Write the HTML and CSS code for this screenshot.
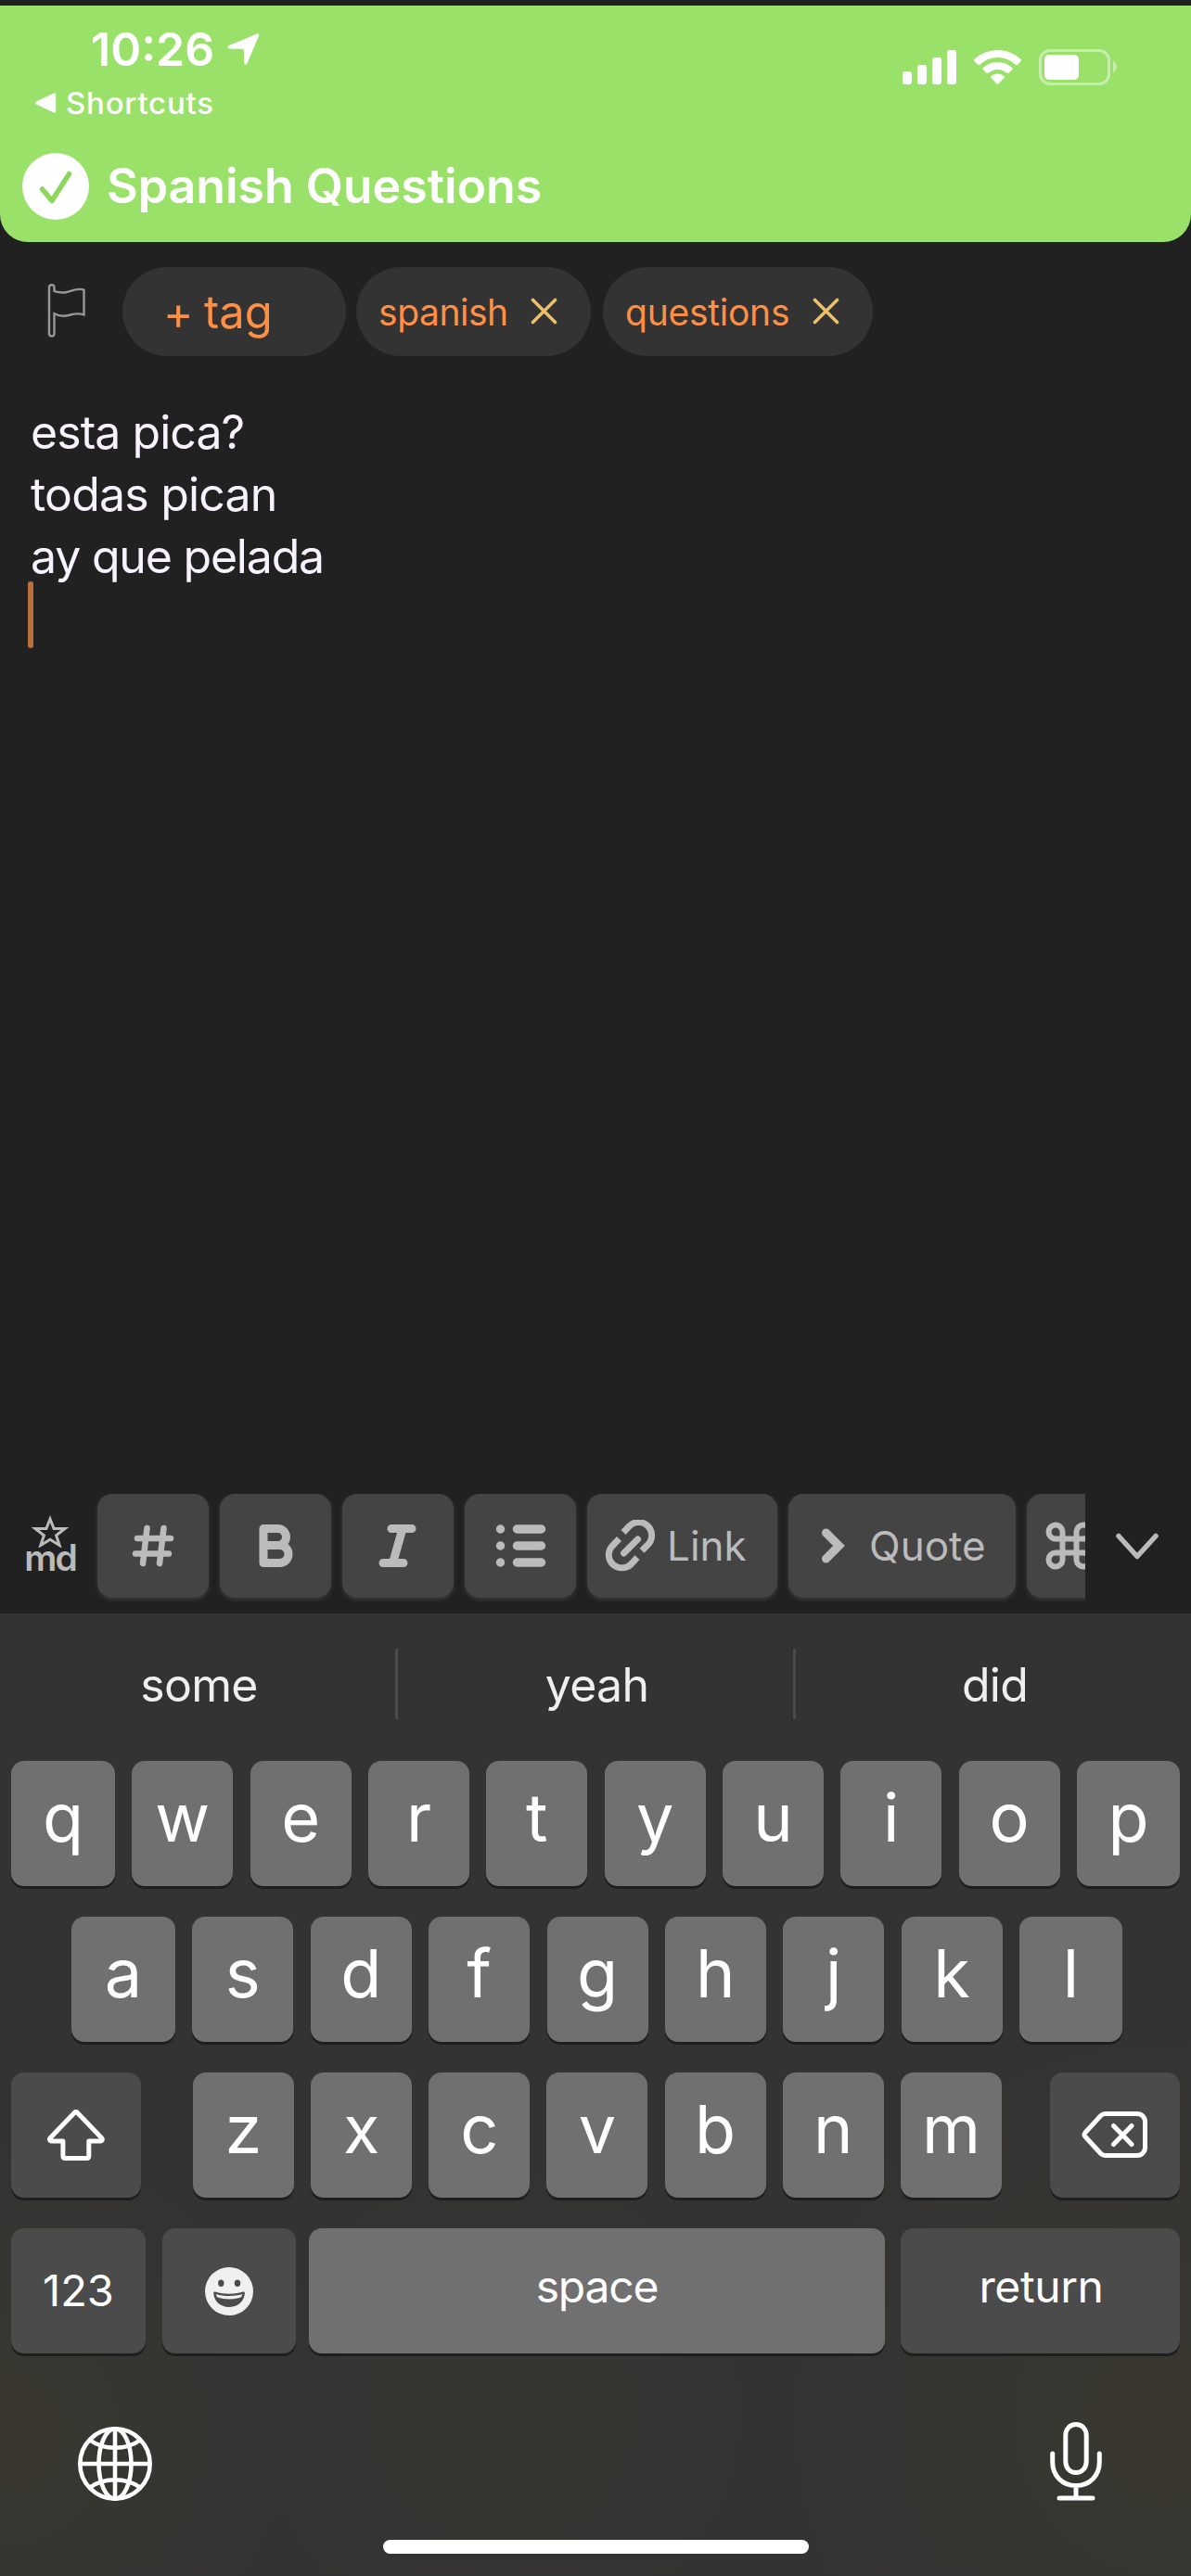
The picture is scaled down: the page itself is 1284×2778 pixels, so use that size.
FILE: index.html
```html
<!DOCTYPE html>
<html lang="en">
<head>
<meta charset="utf-8">
<title>Spanish Questions</title>
<link rel="stylesheet" href="styles.css">
</head>
<body>
<header class="header">
  <div class="status">
    <div class="status-left">
      <div class="time-row">
        <span class="time">10:26</span>
        <svg class="location" width="36" height="36" viewBox="0 0 36 36"><path d="M33 1.500c1.600-.5 2.600.5 2 2.200L22.500 33.200c-.8 2-3.200 1.700-3.300-.5L18.800 19.300c0-1-.5-1.500-1.500-1.500L3.400 17.500c-2.200-.1-2.600-2.500-.5-3.400z"/></svg>
      </div>
      <div class="back-row">
        <svg width="23" height="22" viewBox="0 0 23 22"><path d="M1.500 9.300 19.500.7c1.700-.7 2.700 0 2.700 1.500v17.600c0 1.500-1 2.200-2.700 1.500L1.500 12.700c-1.600-.8-1.600-2.600 0-3.400z"/></svg>
        <span class="back">Shortcuts</span>
      </div>
    </div>
    <svg class="status-icons" width="232" height="44" viewBox="0 0 232 44">
      <rect x="1" y="27" width="10" height="14" rx="3"/><rect x="17" y="20" width="10" height="21" rx="3"/><rect x="33" y="12" width="10" height="29" rx="3"/><rect x="49" y="4" width="10" height="37" rx="3"/>
      <path d="M103.500 4c9.500 0 18.300 3.700 25 10 .7.700.7 1.400.1 2l-3.600 3.700c-.7.700-1.400.6-2.100 0a28.300 28.300 0 0 0-38.800 0c-.7.600-1.400.7-2.100 0L78.400 16c-.6-.6-.6-1.300.1-2A36.300 36.300 0 0 1 103.500 4z"/>
      <path d="M103.500 17c6 0 11.500 2.300 15.700 6.100.7.700.7 1.400.1 2l-3.800 3.700c-.6.600-1.300.6-2 0a15 15 0 0 0-20 0c-.7.600-1.400.6-2 0l-3.800-3.700c-.6-.6-.6-1.300.1-2A23 23 0 0 1 103.500 17z"/>
      <path d="M103.500 29.500c2.600 0 5 .9 6.900 2.400.7.600.7 1.300.1 2l-5.900 6.300c-.7.700-1.500.7-2.200 0l-5.900-6.300c-.6-.7-.6-1.400.1-2 1.900-1.500 4.300-2.400 6.900-2.400z"/>
      <g opacity=".45"><rect class="battery" x="149.500" y="4.500" width="74" height="36" rx="10.500"/><path d="M228 16c5 2 5 10 0 12z"/></g>
      <rect x="154" y="9" width="37" height="27" rx="5"/>
    </svg>
  </div>
  <div class="title-row">
    <svg class="check" width="72" height="72" viewBox="0 0 72 72"><circle cx="36" cy="36" r="36"/><path d="M21.500 39 32 51.500 50.500 22.500"/></svg>
    <h1 class="title">Spanish Questions</h1>
  </div>
</header>

<div class="tags">
  <svg class="flag" width="42" height="60" viewBox="0 0 42 60"><path d="M2 4.500a2.800 2.800 0 0 1 5.500 0v4.300c4 1.600 8 2 12.500 1.500 6-.8 11.500-5.500 19.500-2.600v26.800c-8-3-13.500.2-19.500 1-4.500.6-8.500-.2-12.500-2.200v22a2.800 2.800 0 0 1-5.500 0z"/></svg>
  <span class="pill pill-add"><span class="plus">+</span><span class="tag-word">tag</span></span>
  <span class="pill pill-spanish"><span class="tag-name">spanish</span><svg class="close" width="29" height="29" viewBox="0 0 29 29"><path d="M2.500 2.500l24 24m0-24l-24 24"/></svg></span>
  <span class="pill pill-questions"><span class="tag-name">questions</span><svg class="close" width="29" height="29" viewBox="0 0 29 29"><path d="M2.500 2.500l24 24m0-24l-24 24"/></svg></span>
</div>

<main class="editor">
  <p class="line-1">esta pica?</p>
  <p class="line-2">todas pican</p>
  <p class="line-3">ay que pelada</p>
  <div class="caret"></div>
</main>

<div class="toolbar">
  <div class="markdown">
    <svg width="44" height="36" viewBox="0 0 44 36"><path d="M22 5l4.100 10.500H38l-9.400 7.200 3.600 10.800L22 27.200l-10.200 6.300 3.600-10.800L6 15.500h11.900z"/></svg>
    <span class="md">md</span>
  </div>
  <div class="tools">
    <div class="tool"><svg width="50" height="50" viewBox="0 0 50 50"><path class="hash" d="M18.500 6l-4.500 38M36.500 6l-4.500 38M8 17h36M6 33.500h36"/></svg></div>
    <div class="tool"><svg width="50" height="50" viewBox="0 0 50 50"><path class="bold" d="M12 6.500h15.500a8.700 8.700 0 0 1 0 18H12zM12 24.500h17.500a9.300 9.300 0 0 1 0 19H12z"/></svg></div>
    <div class="tool"><svg width="50" height="50" viewBox="0 0 50 50"><path class="italic" d="M18 6.500h22M9 43.500h22M30 6.500L19.500 43.500"/></svg></div>
    <div class="tool"><svg width="60" height="50" viewBox="0 0 60 50"><path class="list" d="M26.500 7h26M26.500 25h26M26.500 43h26M8.500 7h.01M8.500 25h.01M8.500 43h.01"/></svg></div>
    <div class="tool tool-link"><svg width="56" height="56" viewBox="0 0 56 56"><path class="link" d="M20 13.500l6.500-6.700a14 14 0 0 1 20 0c5.500 5.500 5.500 14.500 0 20L40 33.300M15.500 20.500l-7 7.200a14 14 0 0 0 0 20c5.500 5.500 14.500 5.500 20 0l6.500-7"/><path class="link-bar" d="M20.500 36L35.500 21"/></svg><span class="tool-text t-link">Link</span></div>
    <div class="tool tool-quote"><svg width="26" height="38" viewBox="0 0 26 38"><path class="quote" d="M5.500 5l14 14-14 14"/></svg><span class="tool-text t-quote">Quote</span></div>
    <div class="tool tool-command"><svg width="52" height="52" viewBox="0 0 52 52"><path class="command" d="M18.500 18.500v-8a7.500 7.500 0 1 0-7.500 8h30a7.500 7.500 0 1 0-7.500-8v31a7.500 7.500 0 1 0 7.500-8H11a7.500 7.500 0 1 0 7.500 8z"/></svg></div>
  </div>
  <svg class="collapse" width="48" height="30" viewBox="0 0 48 30"><path d="M4 3.500l20 22 20-22"/></svg>
</div>

<section class="keyboard">
  <div class="suggestions"><div>some</div><i></i><div>yeah</div><i></i><div>did</div></div>
  <div class="keys row1"><b>q</b><b>w</b><b>e</b><b>r</b><b>t</b><b>y</b><b>u</b><b>i</b><b>o</b><b>p</b></div>
  <div class="keys row2"><b>a</b><b>s</b><b>d</b><b>f</b><b>g</b><b>h</b><b>j</b><b>k</b><b>l</b></div>
  <div class="keys row3">
    <div class="key-dark"><svg width="62" height="56" viewBox="0 0 62 56"><path class="outline" d="M29.400 3.200a2 2 0 0 1 2.900 0L58.500 30.500c1.400 1.500.8 3.400-1.200 3.400H44.800v16c0 1.500-1 2.500-2.500 2.500H19.400c-1.500 0-2.500-1-2.500-2.500v-16H4.500c-2 0-2.600-1.900-1.200-3.400z"/></svg></div>
    <div class="letters"><b>z</b><b>x</b><b>c</b><b>v</b><b>b</b><b>n</b><b>m</b></div>
    <div class="key-dark"><svg width="72" height="56" viewBox="0 0 72 56"><path class="outline" d="M25.500 4.500H60a8.500 8.500 0 0 1 8.500 8.500v28a8.500 8.500 0 0 1-8.500 8.500H25.500c-2 0-3.300-.6-4.700-2L4 29.200c-1.300-1.500-1.300-2.900 0-4.400L20.800 6.500c1.400-1.400 2.700-2 4.700-2zM34.500 17.500L54 37.500M54 17.500L34.500 37.500"/></svg></div>
  </div>
  <div class="keys row4">
    <div class="key-dark key-num"><span class="num">123</span></div>
    <div class="key-dark key-emoji"><svg width="52" height="52" viewBox="0 0 52 52"><circle cx="26" cy="26" r="26" fill="#f0f0f0"/><ellipse cx="17.300" cy="17.300" rx="3.200" ry="3.700" fill="#4b4b4b"/><ellipse cx="35" cy="17.300" rx="3.200" ry="3.700" fill="#4b4b4b"/><path d="M11 26.500c9.500 3 20.500 3 30 0 1.200-.4 2 .4 1.900 1.600C42.200 37 35.500 43 26 43S9.800 37 9.200 28.100c-.1-1.200.6-2 1.800-1.600z" fill="#4b4b4b"/><path d="M11.800 29c9 2.800 19.500 2.800 28.500 0-.4 1.800-1 3-1.800 3.600-7.500 2.500-17.400 2.500-24.900 0-.8-.6-1.400-1.800-1.800-3.600z" fill="#f0f0f0"/></svg></div>
    <div class="key-light"><span class="space">space</span></div>
    <div class="key-dark key-return"><span class="return">return</span></div>
  </div>
  <div class="bottom">
    <svg width="84" height="84" viewBox="0 0 84 84"><g class="globe"><circle cx="42" cy="42" r="37.700"/><ellipse cx="42" cy="42" rx="17.500" ry="37.700"/><path d="M42 4v76M4 42h76M15 16.500c15 11 39 11 54 0M15 67.500c15-11 39-11 54 0"/></g></svg>
    <svg class="mic" width="60" height="88" viewBox="0 0 60 88"><path class="outline" d="M30 4.500c6.500 0 11.200 5 11.200 12v28c0 7-4.700 12-11.200 12s-11.200-5-11.200-12v-28c0-7 4.700-12 11.200-12zM4.700 36v9c0 14.500 10.300 25.500 25.300 25.500S55.300 59.500 55.300 45v-9M30 70.500v13.500M12 84h36"/></svg>
  </div>
  <div class="home"></div>
</section>
</body>
</html>
```
FILE: styles.css
```css
* { box-sizing: border-box; }
body {
  margin: 0;
  padding-top: 6px;
  width: 1284px;
  height: 2778px;
  display: flex;
  flex-direction: column;
  overflow: hidden;
  background: #212121;
  color: #fff;
  font-family: Inter, "Liberation Sans", sans-serif;
}
svg { display: block; flex: none; }
p, h1 { margin: 0; }
span { white-space: nowrap; }

/* Status bar and note title */
.header {
  height: 255px;
  flex: none;
  background: #9ae16a;
  border-radius: 0 0 30px 30px;
}
.status { display: flex; justify-content: space-between; height: 116px; fill: #fff; }
.status-left { display: flex; flex-direction: column; }
.time-row { display: flex; height: 94px; padding: 0 0 0 98px; }
.time { font-size: 50px; font-weight: 600; line-height: 94px; width: 136px; }
.location { margin: 29px 0 0 10px; }
.back-row { display: flex; align-items: center; height: 22px; padding-left: 38px; gap: 10px; }
.back { font-size: 33px; line-height: 22px; font-weight: 500; letter-spacing: .75px; }
.status-icons { margin: 44px 80px 0 0; }
.battery { fill: none; stroke: #fff; stroke-width: 3; }
.title-row { display: flex; align-items: center; height: 100px; margin-top: 29px; padding-left: 24px; gap: 19px; }
.check circle { fill: #fff; }
.check path { fill: none; stroke: #8fd65f; stroke-width: 5.500; stroke-linecap: round; stroke-linejoin: round; }
.title { font-size: 52px; font-weight: 600; line-height: 102px; letter-spacing: -.1px; white-space: nowrap; }

/* Tags */
.tags { display: flex; flex: none; height: 96px; margin-top: 27px; padding-left: 51px; color: #ff8f45; }
.flag { margin: 17px 39px 0 0; fill: none; stroke: #98989c; stroke-width: 2.400; }
.pill { height: 96px; border-radius: 48px; background: #333; display: flex; }
.pill-add { width: 241px; padding-left: 44px; font-size: 49px; line-height: 98px; }
.plus { width: 44px; line-height: 100px; }
.pill-spanish { width: 253px; margin-left: 11px; padding-left: 24px; letter-spacing: -.45px; }
.pill-questions { width: 291px; margin-left: 13px; padding-left: 24px; letter-spacing: -.25px; }
.tag-name { font-size: 39px; line-height: 97px; flex: 1; }
.close { margin: 33px 36px 0 0; fill: none; stroke: #efbf63; stroke-width: 3.600; stroke-linecap: round; }

/* Note text */
.editor { flex: 1; padding: 49px 0 0 33px; font-size: 50px; line-height: 67px; color: #f8f2ff; }
.line-1 { letter-spacing: -.95px; }
.line-2 { letter-spacing: -.8px; }
.line-3 { letter-spacing: -1.200px; }
.caret { width: 6px; height: 72px; margin: -7px 0 0 -3px; border-radius: 3px; background: #ba713e; }

/* Markdown toolbar */
.toolbar { display: flex; flex: none; height: 129px; color: #bbb; }
.markdown { display: flex; flex-direction: column; align-items: center; width: 97px; padding: 22px 0 0 11px; fill: none; stroke: #bbb; stroke-width: 3; }
.md { font-size: 39px; line-height: 22px; font-weight: 600; letter-spacing: -2px; stroke: none; }
.tools { display: flex; gap: 12px; width: 1073px; padding-left: 8px; height: 129px; overflow: hidden; }
.tool { flex: none; width: 120px; height: 112px; border-radius: 16px; background: #444; box-shadow: 0 2px 5px #3c3c3c; display: flex; align-items: center; justify-content: center; fill: none; stroke: #bbb; stroke-linecap: round; stroke-linejoin: round; }
.hash { stroke-width: 6.500; }
.bold, .italic { stroke-width: 9; }
.list { stroke-width: 9.500; }
.link { stroke-linecap: butt; stroke-width: 7; }
.link-bar { stroke-width: 7; }
.quote { stroke-linejoin: miter; stroke-width: 9; }
.command { stroke-width: 6; }
.tool-link { width: 205px; justify-content: flex-start; padding-left: 19px; }
.tool-quote { width: 245px; justify-content: flex-start; padding-left: 35px; }
.tool-command { justify-content: flex-start; padding-left: 20px; }
.tool-text { font-size: 44px; line-height: 112px; stroke: none; }
.t-link { margin-left: 11px; }
.t-quote { margin-left: 26px; }
.collapse { margin: 42px 0 0 32px; fill: none; stroke: #bbb; stroke-width: 5.500; stroke-linecap: round; stroke-linejoin: round; }

/* Keyboard */
.keyboard {
  flex: none;
  height: 1038px;
  background:
    radial-gradient(circle at 0 880px, #39372f 0, #39372f00 320px),
    radial-gradient(circle at 1260px 870px, #39372f 0, #39372f00 420px),
    radial-gradient(circle at 540px 860px, #363530 0, #36353000 280px),
    #333;
}
.suggestions { display: flex; height: 159px; font-size: 50px; line-height: 154px; letter-spacing: -.75px; color: #efefef; }
.suggestions div { flex: 1; text-align: center; padding-left: 3px; }
.suggestions i { width: 3px; height: 76px; margin-top: 38px; background: #4b4b4b; }
.keys { display: flex; height: 135px; margin-bottom: 33px; padding: 0 12px; justify-content: space-between; }
.keys b { width: 109px; height: 135px; font-weight: 400; font-size: 72px; line-height: 121px; text-align: center; }
.keys > b:first-child { width: 112px; }
.keys > b:last-child { width: 111px; }
.keys b, .key-light { background: #707070; border-radius: 14px; box-shadow: 0 3px 0 #1e1e1e; }
.key-dark { background: #4b4b4b; border-radius: 14px; box-shadow: 0 3px 0 #1e1e1e; display: flex; align-items: center; justify-content: center; }
.keys.row2 { padding: 0 74px 0 77px; }
.row3 .key-dark { width: 140px; }
.letters { display: flex; justify-content: space-between; width: 872px; margin-left: 4px; }
.outline { fill: none; stroke: #fff; stroke-width: 5; stroke-linecap: round; stroke-linejoin: round; }
.keys.row4 { justify-content: flex-start; gap: 14px; margin-bottom: 0; }
.key-num { width: 145px; margin-right: 4px; }
.key-emoji { width: 144px; }
.row4 .key-light { width: 621px; margin-right: 3px; text-align: center; }
.key-return { width: 301px; }
.num { font-size: 47px; line-height: 133px; align-self: flex-start; }
.space, .return { font-size: 48px; line-height: 125px; align-self: flex-start; }
.space { letter-spacing: -1.200px; }
.return { letter-spacing: -.4px; padding-left: 2px; }
.bottom { display: flex; justify-content: space-between; align-items: center; height: 201px; padding: 36px 94px 0 82px; }
.mic { margin-bottom: 5px; }
.globe { fill: none; stroke: #fff; stroke-width: 4.600; }
.home { width: 459px; height: 15px; margin: 0 auto; border-radius: 8px; background: #fff; }
```
